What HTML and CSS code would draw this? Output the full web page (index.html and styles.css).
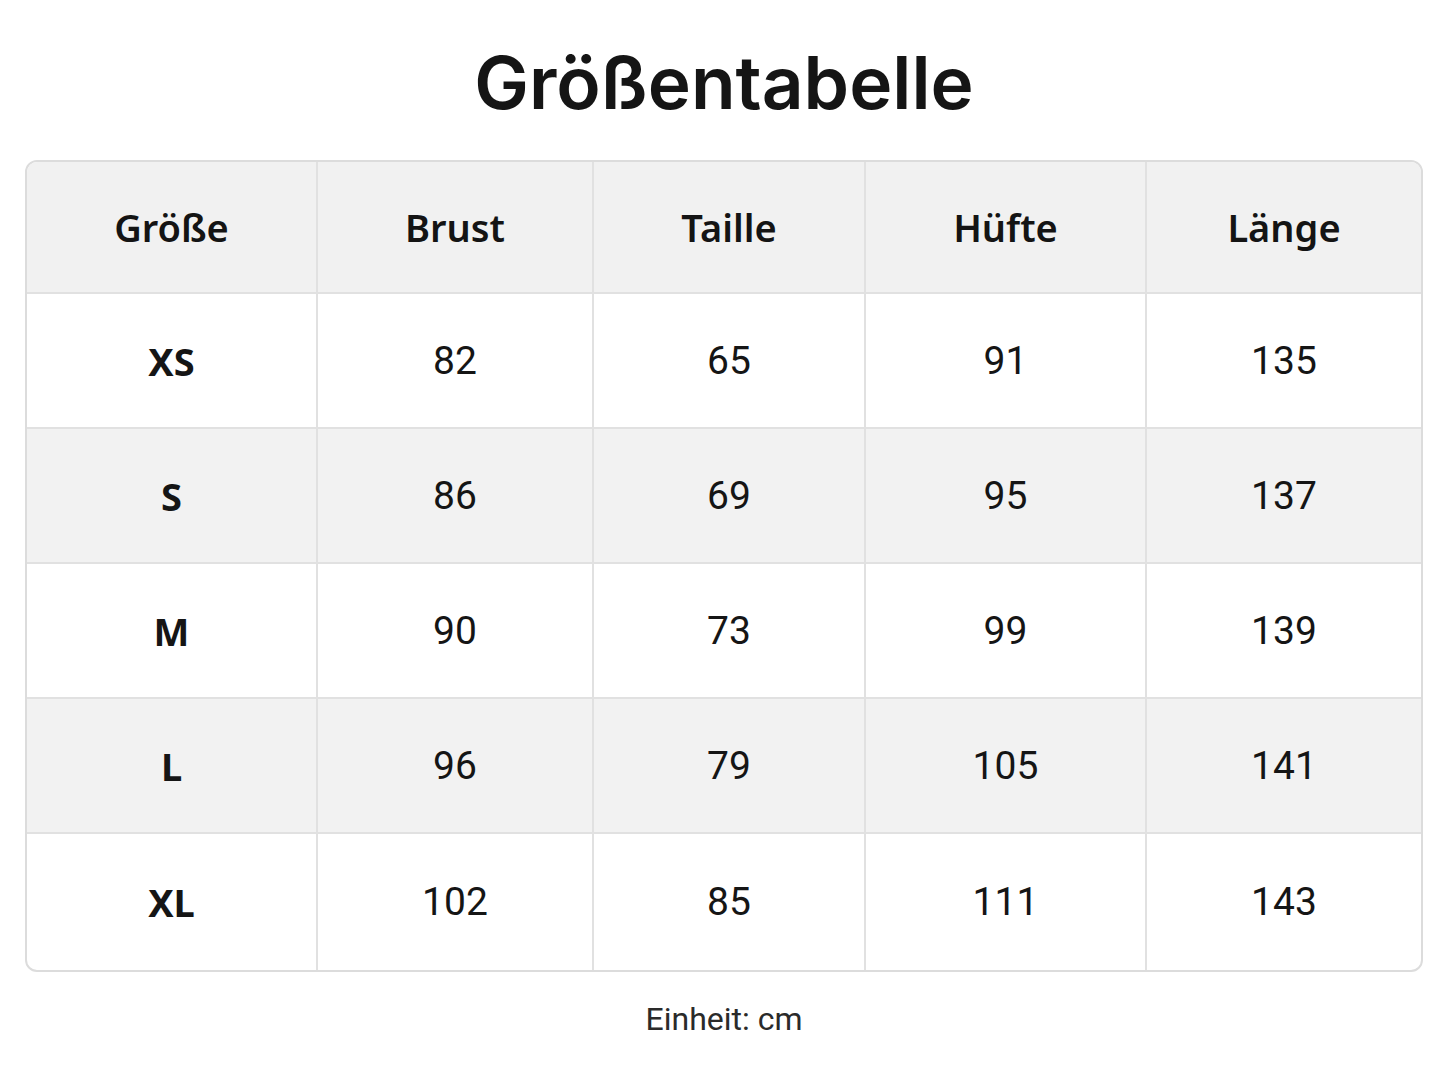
FILE: index.html
```html
<!DOCTYPE html>
<html lang="de">
<head>
<meta charset="utf-8">
<title>Größentabelle</title>
<link rel="stylesheet" href="styles.css">
</head>
<body>
<main class="page">
  <h1 class="title">Größentabelle</h1>
  <div class="table-wrap">
    <table class="size-table">
      <colgroup>
        <col class="c1"><col class="c2"><col class="c3"><col class="c4"><col class="c5">
      </colgroup>
      <thead>
        <tr><th>Größe</th><th>Brust</th><th>Taille</th><th>Hüfte</th><th>Länge</th></tr>
      </thead>
      <tbody>
        <tr><td class="size">XS</td><td>82</td><td>65</td><td>91</td><td>135</td></tr>
        <tr class="alt"><td class="size">S</td><td>86</td><td>69</td><td>95</td><td>137</td></tr>
        <tr><td class="size">M</td><td>90</td><td>73</td><td>99</td><td>139</td></tr>
        <tr class="alt"><td class="size">L</td><td>96</td><td>79</td><td>105</td><td>141</td></tr>
        <tr><td class="size">XL</td><td>102</td><td>85</td><td>111</td><td>143</td></tr>
      </tbody>
    </table>
  </div>
  <p class="unit">Einheit: cm</p>
</main>
</body>
</html>
```
FILE: styles.css
```css
html, body {
  margin: 0;
  padding: 0;
  background: #ffffff;
}
.page {
  width: 1448px;
  height: 1086px;
  box-sizing: border-box;
  padding: 40px 25px 0 25px;
  display: flex;
  flex-direction: column;
  align-items: center;
  font-family: Roboto, "Noto Sans", sans-serif;
  color: #111;
}
.title {
  margin: 0;
  height: 90px;
  line-height: 86px;
  font-family: Inter, "Noto Sans", sans-serif;
  font-weight: 600;
  font-size: 73px;
  letter-spacing: 0px;
  color: #151515;
}
.table-wrap {
  margin-top: 30px;
  width: 1398px;
  border: 2px solid #dcdcdc;
  border-radius: 12px;
  overflow: hidden;
  box-sizing: border-box;
}
.size-table {
  width: 100%;
  border-collapse: collapse;
  table-layout: fixed;
}
.c1 { width: 290px; }
.c2 { width: 276px; }
.c3 { width: 272px; }
.c4 { width: 281px; }
.c5 { width: auto; }
.size-table th,
.size-table td {
  border-right: 2px solid #e1e1e1;
  border-bottom: 2px solid #e1e1e1;
  text-align: center;
  padding: 0;
}
.size-table th:last-child,
.size-table td:last-child { border-right: none; }
.size-table tbody tr:last-child td { border-bottom: none; }
.size-table thead th {
  background: #f1f1f1;
  height: 130px;
  font-family: "Noto Sans", sans-serif;
  font-weight: 600;
  font-size: 38px;
  color: #141414;
}
.size-table td {
  height: 133px;
  font-size: 39px;
  font-weight: 400;
  color: #151515;
}
.size-table tbody tr:last-child td { height: 136px; }
.size-table td.size {
  font-family: "Noto Sans", sans-serif;
  font-weight: 700;
  font-size: 38px;
}
.size-table tr.alt td { background: #f2f2f2; }
.unit {
  margin: 28px 0 0 0;
  font-size: 32px;
  color: #2a2a2a;
}
```
